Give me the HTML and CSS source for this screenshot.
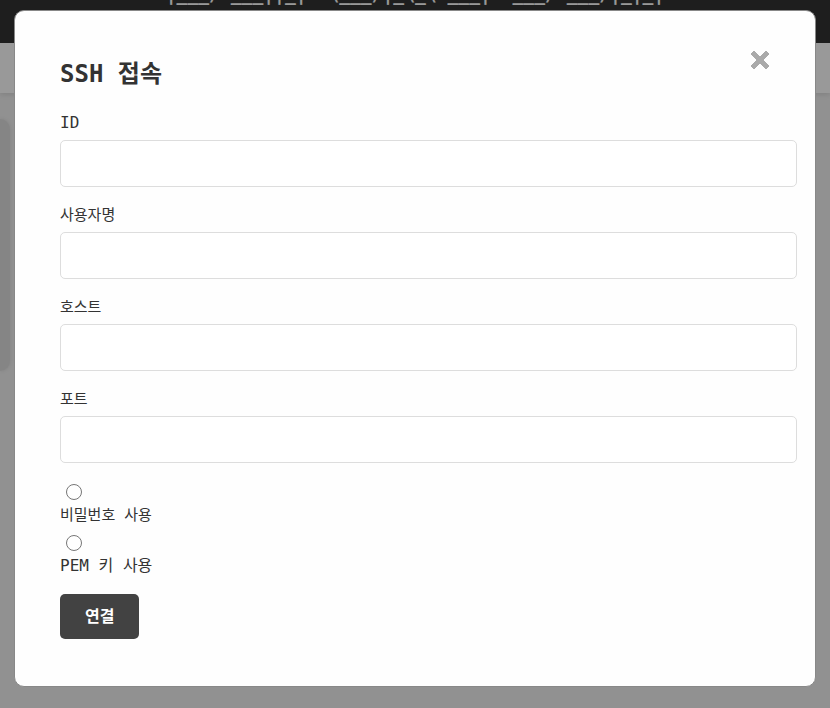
FILE: index.html
```html
<!DOCTYPE html>
<html lang="ko">
<head>
<meta charset="utf-8">
<title>SSH 접속</title>
<link rel="stylesheet" href="styles.css">
</head>
<body>
<header class="banner"><pre class="banner-art">|___/ ___||_|  \___/|_\_\ ___|  ___/ ___/|_|_|</pre></header>
<nav class="toolbar"></nav>
<main class="page"><section class="card"></section></main>
<div class="overlay">
  <div class="modal" role="dialog" aria-labelledby="modal-title">
    <div class="modal-header">
      <h2 class="modal-title" id="modal-title">SSH 접속</h2>
      <button class="close" type="button">
        <svg width="20" height="20" viewBox="0 0 20 20" aria-hidden="true"><path d="M4 1 10 7 16 1 19 4 13 10 19 16 16 19 10 13 4 19 1 16 7 10 1 4z" fill="currentColor" stroke="currentColor" stroke-width="1" stroke-linejoin="round"/></svg>
      </button>
    </div>
    <form class="form">
      <div class="field"><label for="id">ID</label><input class="text-input" id="id" type="text"></div>
      <div class="field"><label class="korean" for="user">사용자명</label><input class="text-input" id="user" type="text"></div>
      <div class="field"><label class="korean" for="host">호스트</label><input class="text-input" id="host" type="text"></div>
      <div class="field"><label class="korean" for="port">포트</label><input class="text-input" id="port" type="text"></div>
      <div class="options">
        <div class="option"><input class="radio" id="password" type="radio" name="auth"><label class="korean" for="password">비밀번호 사용</label></div>
        <div class="option"><input class="radio" id="pem" type="radio" name="auth"><label for="pem">PEM 키 사용</label></div>
      </div>
      <button class="submit" type="submit">연결</button>
    </form>
  </div>
</div>
</body>
</html>
```
FILE: styles.css
```css
* {
  box-sizing: border-box;
}

body {
  margin: 0;
  min-height: 100vh;
  overflow: hidden;
  background: #f2f2f2;
  color: #333;
  font: 16px/24px "DejaVu Sans Mono", "Noto Sans CJK KR", monospace;
}

.banner {
  display: flex;
  justify-content: center;
  align-items: flex-start;
  height: 43px;
  background: #333;
  color: #fff;
}

.banner-art {
  margin: -17px 0 0;
  font: bold 18px/24px "DejaVu Sans Mono", monospace;
}

.toolbar {
  height: 50px;
  background: #fff;
  box-shadow: 0 2px 5px rgba(0, 0, 0, 0.1);
}

.page {
  padding: 26px 0;
}

.card {
  width: 10px;
  height: 252px;
  border-radius: 0 10px 10px 0;
  background: #dedede;
  box-shadow: 0 0 4px rgba(0, 0, 0, 0.1);
}

.overlay {
  position: fixed;
  inset: 0;
  padding: 10px 14px;
  overflow: auto;
  background: rgba(0, 0, 0, 0.4);
}

.modal {
  padding: 34px 45px 47px;
  border: 1px solid #888;
  border-radius: 10px;
  background: #fefefe;
}

.modal-header {
  display: flex;
  justify-content: space-between;
  align-items: flex-start;
  margin-bottom: 19px;
}

.modal-title {
  margin: 11px 0 0;
  font-size: 24px;
  line-height: 36px;
}

.close {
  padding: 5px 0;
  border: 0;
  background: none;
  color: #aaa;
}

.close svg {
  display: block;
}

.form {
  margin-right: -27px;
}

.field {
  display: flex;
  flex-direction: column;
  gap: 5px;
  margin-bottom: 16px;
}

.korean {
  font-size: 15px;
}

.text-input {
  width: 100%;
  height: 47px;
  padding: 12px;
  border: 1px solid #ddd;
  border-radius: 5px;
  background: #fff;
  font: inherit;
}

.options {
  display: grid;
  gap: 8px;
  padding: 5px 0 16px;
}

.option {
  display: flex;
  flex-direction: column;
  align-items: flex-start;
  gap: 3px;
}

.radio {
  width: 16px;
  height: 16px;
  margin: 0 6px;
}

.submit {
  display: block;
  height: 45px;
  padding: 0 25px;
  border: 0;
  border-radius: 5px;
  background: #424242;
  color: #fff;
  font: bold 16px/24px "DejaVu Sans Mono", "Noto Sans CJK KR", monospace;
}
```
